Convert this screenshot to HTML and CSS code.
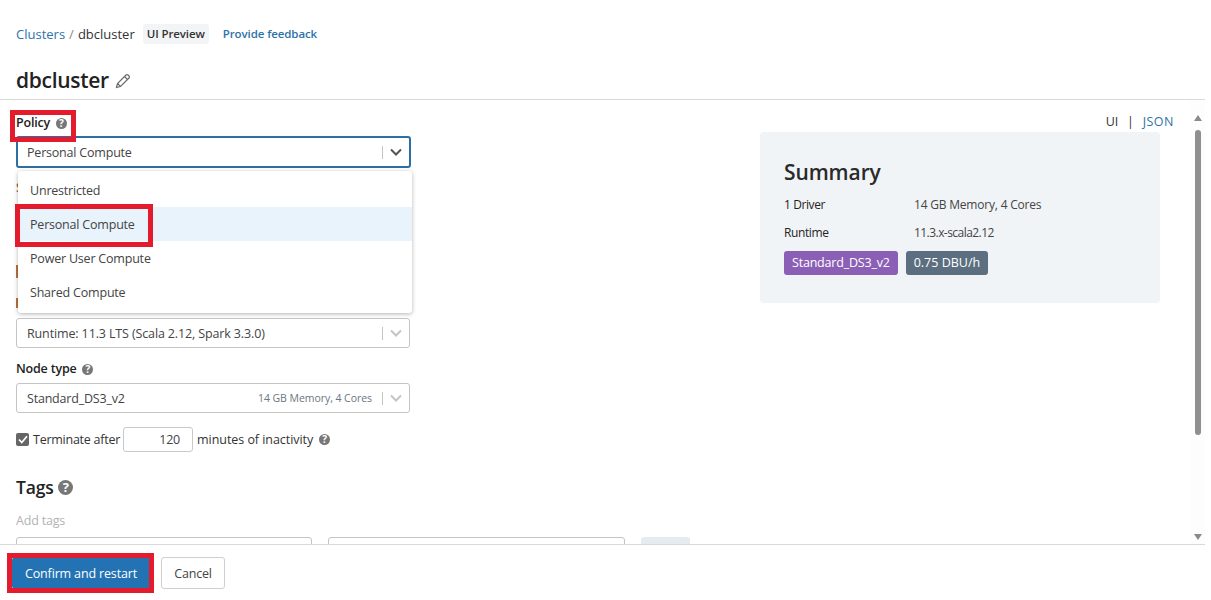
FILE: index.html
```html
<!DOCTYPE html>
<html lang="en">
<head>
    <meta charset="UTF-8">
    <meta name="viewport" content="width=device-width, initial-scale=1.0">
    <title>dbcluster</title>
    <link rel="stylesheet" href="styles.css">
</head>
<body>
    <div class="page">
        <div class="breadcrumbs">
            <a class="link" href="#">Clusters</a>
            <span class="crumb-sep">/</span>
            <span>dbcluster</span>
            <span class="preview-tag">UI Preview</span>
            <a class="feedback" href="#">Provide feedback</a>
        </div>

        <div class="title-row">
            <h1 class="title">dbcluster</h1>
            <svg class="pencil" width="16" height="16" viewBox="0 0 16 16" fill="none" stroke="#6b6b6b" stroke-width="1.2">
                <path d="M1.500 14.500l1-4L11 2a1.400 1.400 0 0 1 2 0l1 1a1.400 1.400 0 0 1 0 2l-8.500 8.500z"/>
                <path d="M9.500 3.500l3 3M2.500 10.500l3 3"/>
            </svg>
        </div>

        <div class="scroller">
            <main class="content">
                <div class="form-col">
                    <div class="field-label policy-label">
                        Policy
                        <span class="help">?</span>
                    </div>

                    <div class="select-wrap">
                        <div class="select select-open">
                            <span class="select-value">Personal Compute</span>
                            <span class="select-sep"></span>
                            <svg class="chevron" width="12" height="8" viewBox="0 0 12 8" fill="none" stroke="#545454" stroke-width="2"><path d="M1 1.500l5 5 5-5"/></svg>
                        </div>
                        <ul class="dropdown">
                            <li class="option">Unrestricted</li>
                            <li class="option option-active">Personal Compute</li>
                            <li class="option">Power User Compute</li>
                            <li class="option">Shared Compute</li>
                        </ul>
                    </div>

                    <!-- labels hidden behind the open dropdown -->
                    <div class="hidden-rows">
                        <div class="hidden-s">S</div>
                        <div class="hidden-mark hidden-mark-a"></div>
                        <div class="hidden-mark hidden-mark-b"></div>
                    </div>

                    <div class="select select-runtime">
                        <span class="select-value">Runtime: 11.3 LTS (Scala 2.12, Spark 3.3.0)</span>
                        <span class="select-sep"></span>
                        <svg class="chevron" width="12" height="8" viewBox="0 0 12 8" fill="none" stroke="#c4c4c4" stroke-width="2"><path d="M1 1.500l5 5 5-5"/></svg>
                    </div>

                    <div class="field-label node-label">
                        Node type
                        <span class="help">?</span>
                    </div>
                    <div class="select">
                        <span class="select-value">Standard_DS3_v2</span>
                        <span class="select-hint">14 GB Memory, 4 Cores</span>
                        <span class="select-sep"></span>
                        <svg class="chevron" width="12" height="8" viewBox="0 0 12 8" fill="none" stroke="#c4c4c4" stroke-width="2"><path d="M1 1.500l5 5 5-5"/></svg>
                    </div>

                    <div class="terminate">
                        <span class="checkbox">
                            <svg width="10" height="9" viewBox="0 0 10 9" fill="none" stroke="#fff" stroke-width="1.800"><path d="M1 4.500l2.800 3L9 1.200"/></svg>
                        </span>
                        <span class="terminate-text">Terminate after</span>
                        <span class="minutes">120</span>
                        <span class="minutes-text">minutes of inactivity</span>
                        <span class="help help-gap">?</span>
                    </div>

                    <h2 class="tags-title">
                        Tags
                        <span class="help help-big">?</span>
                    </h2>
                    <div class="add-tags">Add tags</div>
                    <div class="tag-row">
                        <div class="tag-input tag-key"></div>
                        <div class="tag-input tag-value"></div>
                        <div class="tag-add"></div>
                    </div>
                </div>

                <aside class="side-col">
                    <div class="view-switch">
                        <span>UI</span>
                        <span class="view-sep">|</span>
                        <a class="link json-link" href="#">JSON</a>
                    </div>
                    <div class="summary">
                        <h2 class="summary-title">Summary</h2>
                        <div class="summary-row">
                            <span class="summary-key">1 Driver</span>
                            <span class="summary-val">14 GB Memory, 4 Cores</span>
                        </div>
                        <div class="summary-row">
                            <span class="summary-key">Runtime</span>
                            <span class="summary-val summary-val-tight">11.3.x-scala2.12</span>
                        </div>
                        <div class="badges">
                            <span class="badge badge-purple">Standard_DS3_v2</span>
                            <span class="badge badge-slate">0.75 DBU/h</span>
                        </div>
                    </div>
                </aside>
            </main>

            <div class="scrollbar">
                <span class="arrow arrow-up"></span>
                <div class="track"><div class="thumb"></div></div>
                <span class="arrow arrow-down"></span>
            </div>
        </div>

        <footer class="footer">
            <button class="btn btn-primary">Confirm and restart</button>
            <button class="btn btn-cancel">Cancel</button>
        </footer>

        <!-- red annotation boxes drawn over the screenshot -->
        <div class="mark mark-policy"></div>
        <div class="mark mark-option"></div>
        <div class="mark mark-confirm"></div>
    </div>
</body>
</html>
```

FILE: styles.css
```css
* {
    box-sizing: border-box;
}

html, body {
    margin: 0;
    padding: 0;
    height: 100%;
    overflow: hidden;
}

body {
    font-family: 'Open Sans', 'Noto Sans', sans-serif;
    font-size: 13px;
    color: #333;
    background: #fff;
}

.page {
    position: relative;
    width: 1205px;
    height: 600px;
    display: flex;
    flex-direction: column;
}

.link {
    color: #2e72a8;
    text-decoration: none;
}

.breadcrumbs {
    height: 48px;
    padding: 20px 16px 0;
    display: flex;
    align-items: center;
    font-size: 13px;
    line-height: 20px;
}

.crumb-sep {
    margin: 0 4px;
    color: #888;
}

.preview-tag {
    margin-left: 8px;
    padding: 0 4px;
    height: 20px;
    line-height: 20px;
    font-size: 11.500px;
    font-weight: 600;
    letter-spacing: -0.1px;
    background: #f3f4f5;
    border-radius: 3px;
    color: #333;
}

.feedback {
    margin-left: 14px;
    font-size: 11.500px;
    font-weight: 600;
    letter-spacing: -0.1px;
    color: #2e72a8;
    text-decoration: none;
}

.title-row {
    height: 52px;
    padding: 13px 16px 0;
    display: flex;
    align-items: center;
    gap: 6px;
    border-bottom: 1px solid #d9d9d9;
}

.title {
    margin: 0;
    font-size: 21px;
    font-weight: 600;
    letter-spacing: -0.3px;
    color: #222;
}

.pencil {
    margin-top: 2px;
}

.scroller {
    flex: 1;
    min-height: 0;
    display: flex;
    overflow: hidden;
}

.content {
    flex: 1;
    min-width: 0;
    display: flex;
    justify-content: space-between;
    padding-left: 16px;
}

.form-col {
    width: 394px;
    position: relative;
}

.field-label {
    font-size: 12.500px;
    font-weight: 600;
    letter-spacing: -0.2px;
    color: #222;
    display: flex;
    align-items: center;
    gap: 6px;
    line-height: 18px;
}

.policy-label {
    margin-top: 14px;
    margin-bottom: 4px;
}

.node-label {
    margin-top: 12px;
    margin-bottom: 5px;
}

.help {
    width: 11px;
    height: 11px;
    border-radius: 50%;
    background: #777;
    color: #fff;
    font-size: 10px;
    font-weight: 700;
    line-height: 11px;
    text-align: center;
    display: inline-block;
    letter-spacing: 0;
}

.help-gap {
    margin-left: 6px;
}

.help-big {
    width: 15px;
    height: 15px;
    font-size: 13px;
    line-height: 15px;
    margin-left: 1px;
}

.select-wrap {
    position: relative;
}

.select {
    height: 30px;
    border: 1px solid #c4c4c4;
    border-radius: 3px;
    padding: 0 7px 0 10px;
    display: flex;
    align-items: center;
    letter-spacing: -0.2px;
    color: #444;
    font-size: 12.500px;
}

.select-open {
    border: 2px solid #2e6fa3;
    padding-left: 9px;
    padding-right: 7px;
    height: 32px;
    margin-right: -1px;
}

.select-runtime {
    letter-spacing: -0.13px;
}

.select-value {
    flex: 1;
}

.select-hint {
    font-size: 10.500px;
    color: #6b7680;
    margin-right: 10px;
    letter-spacing: -0.05px;
}

.select-sep {
    width: 1px;
    height: 13px;
    background: #c4c4c4;
    margin-right: 7px;
}

.dropdown {
    position: absolute;
    left: 2px;
    right: -2px;
    top: 35px;
    margin: 0;
    padding: 2px 0 4px;
    list-style: none;
    background: #fff;
    border-radius: 3px;
    box-shadow: 0 1px 4px rgba(0, 0, 0, 0.3);
    z-index: 2;
}

.option {
    height: 34px;
    line-height: 36px;
    padding-left: 12px;
    font-size: 12.500px;
    letter-spacing: -0.2px;
    color: #444;
}

.option-active {
    background: #e8f3fc;
}

.hidden-rows {
    height: 150px;
    position: relative;
}

.hidden-s {
    position: absolute;
    left: 0;
    top: 11px;
    font-size: 12.500px;
    font-weight: 600;
    color: #8a6a3a;
}

.hidden-mark {
    position: absolute;
    left: 0;
    width: 2px;
    background: #b9733f;
}

.hidden-mark-a {
    top: 97px;
    height: 13px;
}

.hidden-mark-b {
    top: 130px;
    height: 10px;
}

.terminate {
    margin-top: 10px;
    display: flex;
    align-items: center;
    font-size: 12.500px;
    color: #333;
    height: 32px;
}

.terminate-text {
    letter-spacing: -0.25px;
}

.minutes-text {
    letter-spacing: -0.05px;
}

.checkbox {
    width: 13px;
    height: 13px;
    border-radius: 2px;
    background: #666;
    display: flex;
    align-items: center;
    justify-content: center;
    margin-right: 4px;
}

.minutes {
    width: 70px;
    height: 25px;
    line-height: 23px;
    border: 1px solid #c9c9c9;
    border-radius: 3px;
    text-align: right;
    padding-right: 12px;
    margin: 0 4px 0 3px;
    letter-spacing: -0.2px;
    color: #444;
}

.tags-title {
    margin: 20px 0 0;
    font-size: 17.500px;
    font-weight: 600;
    line-height: 24px;
    letter-spacing: -0.2px;
    color: #222;
    display: flex;
    align-items: center;
    gap: 4px;
}

.add-tags {
    margin-top: 13px;
    font-size: 12.500px;
    letter-spacing: -0.2px;
    color: #b3b3b3;
    line-height: 18px;
}

.tag-row {
    margin-top: 7px;
    display: flex;
    height: 40px;
}

.tag-input {
    width: 296px;
    height: 30px;
    border: 1px solid #c4c4c4;
    border-radius: 3px;
    flex: none;
}

.tag-value {
    width: 297px;
    margin-left: 16px;
}

.tag-add {
    width: 49px;
    height: 30px;
    margin-left: 16px;
    background: #e4ebf1;
    border-radius: 3px;
    flex: none;
}

.side-col {
    width: 400px;
    margin-right: 30px;
}

.view-switch {
    height: 32px;
    padding-top: 12px;
    display: flex;
    justify-content: flex-end;
    align-items: center;
    font-size: 12.500px;
    letter-spacing: -0.2px;
    line-height: 18px;
    margin-right: -14px;
    color: #333;
}

.view-sep {
    margin: 0 9px 0 9px;
    color: #333;
}

.json-link {
    letter-spacing: 0.5px;
}

.summary {
    background: #f1f4f7;
    border-radius: 4px;
    height: 171px;
    padding: 25px 24px 0;
}

.summary-title {
    margin: 0;
    font-size: 21px;
    font-weight: 600;
    line-height: 30px;
    letter-spacing: -0.1px;
    color: #2a2a2a;
}

.summary-row {
    display: flex;
    margin-top: 8px;
    height: 20px;
    line-height: 20px;
    font-size: 12px;
    letter-spacing: -0.2px;
}

.summary-key {
    width: 130px;
    letter-spacing: -0.4px;
    color: #222;
}

.summary-val {
    color: #444;
}

.summary-val-tight {
    letter-spacing: -0.55px;
}

.badges {
    margin-top: 8px;
    display: flex;
    gap: 8px;
}

.badge {
    height: 24px;
    line-height: 24px;
    padding: 0 8px;
    border-radius: 3px;
    color: #fff;
    font-size: 12.500px;
    letter-spacing: -0.2px;
}

.badge-purple {
    background: #8b5fb5;
}

.badge-slate {
    background: #5b6f80;
    letter-spacing: 0;
}

.scrollbar {
    width: 15px;
    flex: none;
    background: #fdfdfd;
    padding-top: 15px;
    display: flex;
    flex-direction: column;
    align-items: center;
}

.arrow {
    width: 0;
    height: 0;
    border-left: 4px solid transparent;
    border-right: 4px solid transparent;
    flex: none;
}

.arrow-up {
    border-bottom: 6px solid #8a8a8a;
}

.arrow-down {
    border-top: 6px solid #8a8a8a;
    margin-bottom: 4px;
}

.track {
    flex: 1;
    width: 6px;
    padding-top: 9px;
}

.thumb {
    height: 305px;
    background: #8f8f8f;
    border-radius: 3px;
}

.footer {
    height: 56px;
    flex: none;
    border-top: 1px solid #d9d9d9;
    background: #fff;
    display: flex;
    align-items: center;
    padding: 1px 0 0 12px;
    gap: 11px;
}

.btn {
    font-family: inherit;
    font-size: 12.500px;
    height: 32px;
    padding: 0;
    background: #fff;
    color: #444;
    border: 1px solid #cfcfcf;
    border-radius: 3px;
}

.btn-cancel {
    width: 64px;
    letter-spacing: -0.2px;
}

.btn-primary {
    width: 138px;
    background: #2272b4;
    border-color: #2272b4;
    color: #fff;
    letter-spacing: -0.15px;
}

.mark {
    position: absolute;
    border: 5px solid #e31b2c;
    z-index: 5;
    pointer-events: none;
}

.mark-policy {
    left: 10px;
    top: 110px;
    width: 66px;
    height: 32px;
}

.mark-option {
    left: 15px;
    top: 204px;
    width: 138px;
    height: 43px;
}

.mark-confirm {
    left: 7px;
    top: 553px;
    width: 147px;
    height: 40px;
}
```
